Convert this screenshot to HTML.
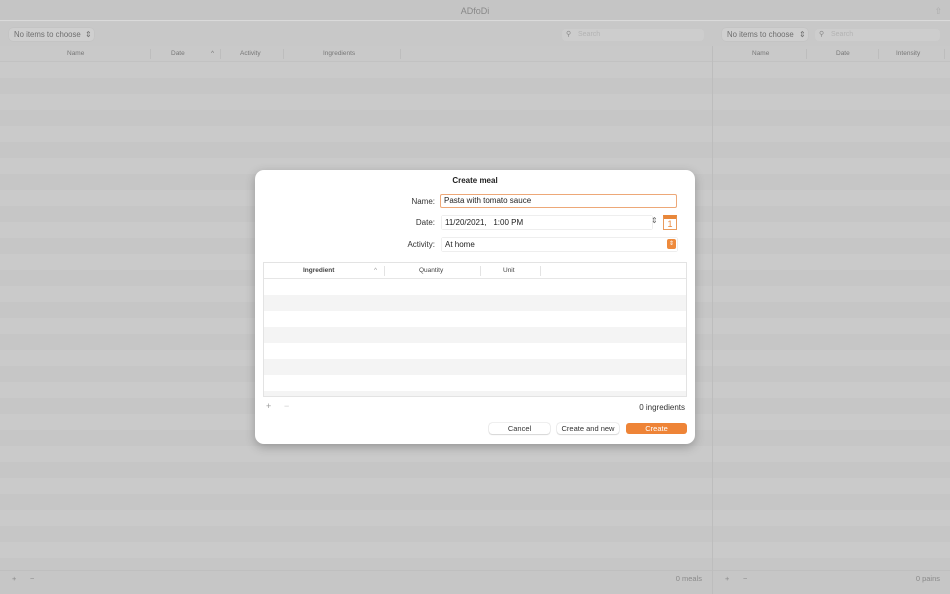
<!DOCTYPE html>
<html><head><meta charset="utf-8"><style>
*{box-sizing:border-box;margin:0;padding:0}
body{width:950px;height:594px;overflow:hidden;background:#c9c9c9;font-family:"Liberation Sans",sans-serif;position:relative;color:#222}
.abs{position:absolute;white-space:nowrap}
.title{left:0;top:0;width:950px;height:21px;background:#c5c5c5;border-bottom:1px solid #dadada;text-align:center;font-size:9px;color:#888;line-height:22px}
.tool{top:22px;height:24px;background:#c8c8c8}
.pop{height:13px;border-radius:4px;background:#cfcfcf;font-size:7.8px;color:#6e6e6e;line-height:13px;padding-left:5px;box-shadow:0 0 1px #b5b5b5}
.search{height:12px;border-radius:4px;background:#cdcdcd;font-size:7px;color:#b3b3b3;line-height:12px;padding-left:16px}
.hdr{top:46px;height:16px;font-size:6.5px;color:#777;line-height:16px;border-bottom:1px solid #c2c2c2}
.rows{top:62px;height:508px;background:repeating-linear-gradient(#cacaca 0 16px,#c6c6c6 16px 32px)}
.foot{top:570px;height:24px;background:#c6c6c6;font-size:7.5px;color:#8a8a8a;line-height:16px}
.dlg{left:255px;top:170px;width:440px;height:274px;background:#fff;border-radius:9px;box-shadow:0 3px 10px rgba(0,0,0,.25)}
.lbl{font-size:8px;color:#333;text-align:right;width:60px}
.field{font-size:8px;color:#222;padding-left:3px;line-height:11px}
.btn{height:11px;border-radius:3px;font-size:7.5px;text-align:center;line-height:11px;box-shadow:0 0 1px #999,0 1px 1px rgba(0,0,0,.12);background:#fff;color:#333}
</style></head><body>
<div class="abs title">ADfoDi<span class="abs" style="right:8px;top:0;color:#aaa">⇧</span></div>
<div class="abs tool" style="left:0;width:950px"></div>
<div class="abs pop" style="left:9px;top:28px;width:85px">No items to choose <span class="abs" style="left:76px;top:0">⇕</span></div>
<div class="abs search" style="left:562px;top:29px;width:142px">Search<span class="abs" style="left:4px;top:0;color:#888">⚲</span></div>
<div class="abs pop" style="left:722px;top:28px;width:86px">No items to choose <span class="abs" style="left:77px;top:0">⇕</span></div>
<div class="abs search" style="left:815px;top:29px;width:125px">Search<span class="abs" style="left:4px;top:0;color:#888">⚲</span></div>
<div class="abs hdr" style="left:0;width:712px">
<span class="abs" style="left:67px">Name</span><span class="abs" style="left:150px;height:10px;top:3px;border-left:1px solid #bdbdbd"></span>
<span class="abs" style="left:171px">Date</span><span class="abs" style="left:211px">^</span><span class="abs" style="left:220px;height:10px;top:3px;border-left:1px solid #bdbdbd"></span>
<span class="abs" style="left:240px">Activity</span><span class="abs" style="left:283px;height:10px;top:3px;border-left:1px solid #bdbdbd"></span>
<span class="abs" style="left:323px">Ingredients</span><span class="abs" style="left:400px;height:10px;top:3px;border-left:1px solid #bdbdbd"></span></div>
<div class="abs hdr" style="left:713px;width:237px">
<span class="abs" style="left:39px">Name</span><span class="abs" style="left:93px;height:10px;top:3px;border-left:1px solid #bdbdbd"></span>
<span class="abs" style="left:123px">Date</span><span class="abs" style="left:165px;height:10px;top:3px;border-left:1px solid #bdbdbd"></span>
<span class="abs" style="left:183px">Intensity</span><span class="abs" style="left:231px;height:10px;top:3px;border-left:1px solid #bdbdbd"></span></div>
<div class="abs rows" style="left:0;width:950px"></div>
<div class="abs" style="left:712px;top:46px;width:1px;height:548px;background:#bdbdbd"></div>
<div class="abs foot" style="left:0;width:712px;border-top:1px solid #bfbfbf"><span class="abs" style="left:12px">+</span><span class="abs" style="left:30px">−</span><span class="abs" style="right:10px">0 meals</span></div>
<div class="abs foot" style="left:713px;width:237px;border-top:1px solid #bfbfbf"><span class="abs" style="left:12px">+</span><span class="abs" style="left:30px">−</span><span class="abs" style="right:10px">0 pains</span></div>

<div class="abs dlg">
<div class="abs" style="left:0;top:6px;width:440px;text-align:center;font-size:8px;font-weight:bold">Create meal</div>
<div class="abs lbl" style="left:120px;top:27px">Name:</div>
<div class="abs field" style="left:185px;top:24px;width:237px;height:14px;border:1.5px solid #eda878;border-radius:2px;line-height:11px">Pasta with tomato sauce</div>
<div class="abs lbl" style="left:120px;top:48px">Date:</div>
<div class="abs field" style="left:187px;top:46px;width:210px;height:13px;box-shadow:0 0 1px #aaa;line-height:13px">11/20/2021, &nbsp;&nbsp;1:00 PM</div>
<div class="abs" style="left:396px;top:46px;font-size:8px;color:#666">⇕</div>
<div class="abs" style="left:408px;top:45px;width:14px;height:15px;border:1px solid #e89a5c;border-top:4px solid #e8873a;font-size:9px;text-align:center;line-height:10px;color:#e8873a">1</div>
<div class="abs lbl" style="left:120px;top:70px">Activity:</div>
<div class="abs field" style="left:187px;top:68px;width:235px;height:13px;box-shadow:0 0 1px #aaa;line-height:13px">At home</div>
<div class="abs" style="left:412px;top:69px;width:9px;height:10px;background:#ee8a3c;border-radius:2px;color:#fff;font-size:6px;text-align:center;line-height:10px">⇕</div>
<div class="abs" style="left:8px;top:92px;width:424px;height:135px;border:1px solid #e3e3e3;background:repeating-linear-gradient(#fff 0 16px,#f4f4f4 16px 32px);background-position:0 16px">
<div class="abs" style="left:0;top:0;width:422px;height:16px;background:#fff;border-bottom:1px solid #e6e6e6;font-size:6.5px;line-height:16px;color:#444">
<span class="abs" style="left:39px;font-weight:bold">Ingredient</span><span class="abs" style="left:110px;color:#999">^</span><span class="abs" style="left:120px;top:3px;height:10px;border-left:1px solid #e3e3e3"></span>
<span class="abs" style="left:155px">Quantity</span><span class="abs" style="left:216px;top:3px;height:10px;border-left:1px solid #e3e3e3"></span>
<span class="abs" style="left:239px">Unit</span><span class="abs" style="left:276px;top:3px;height:10px;border-left:1px solid #e3e3e3"></span></div></div>
<div class="abs" style="left:11px;top:231px;font-size:9px;color:#999">+</div>
<div class="abs" style="left:29px;top:231px;font-size:9px;color:#ccc">−</div>
<div class="abs" style="right:10px;top:233px;font-size:8px;color:#333">0 ingredients</div>
<div class="abs btn" style="left:234px;top:253px;width:61px">Cancel</div>
<div class="abs btn" style="left:302px;top:253px;width:62px">Create and new</div>
<div class="abs btn" style="left:371px;top:253px;width:61px;background:#ee8437;color:#fff;box-shadow:none">Create</div>
</div>
</body></html>
